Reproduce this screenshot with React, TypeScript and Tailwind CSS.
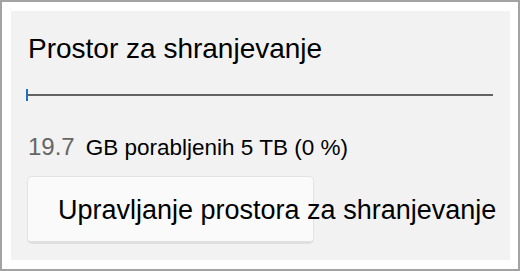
export default function App() {
  return (
    <div
      className="w-[520px] h-[271px] bg-white border-2 border-[#a3a3a3] pt-[9px] pl-[9px] pr-[8px] pb-[9px] overflow-hidden"
      style={{ fontFamily: '"Liberation Sans", Arial, sans-serif' }}
    >
      <div className="h-full bg-[#f2f2f2] pl-[15px] pr-[17px] pt-[21px]">
        <h2 className="text-[28px] leading-[34px] text-black ml-[2px]">Prostor za shranjevanje</h2>

        <div className="mt-[23px] flex items-center h-[12px]">
          <div className="w-[2px] h-[12px] bg-[#1f6fc5]" />
          <div className="flex-1 h-[2px] bg-[#636363]" />
        </div>

        <div className="mt-[32px] flex items-baseline gap-[11px] ml-[2px]">
          <span className="text-[24px] leading-[28px] text-[#666666]">19.7</span>
          <span className="text-[22.5px] leading-[24px] text-black">GB porabljenih 5 TB (0 %)</span>
        </div>

        <button className="mt-[15px] ml-[1px] w-[287px] h-[68px] rounded-[5px] bg-[#fafafa] border border-[#e3e3e3] border-b-[3px] border-b-[#e0e0e0] pl-[30px] pt-[2px] text-left whitespace-nowrap overflow-visible">
          <span className="text-[27px] leading-[32px] text-black">Upravljanje prostora za shranjevanje</span>
        </button>
      </div>
    </div>
  );
}
